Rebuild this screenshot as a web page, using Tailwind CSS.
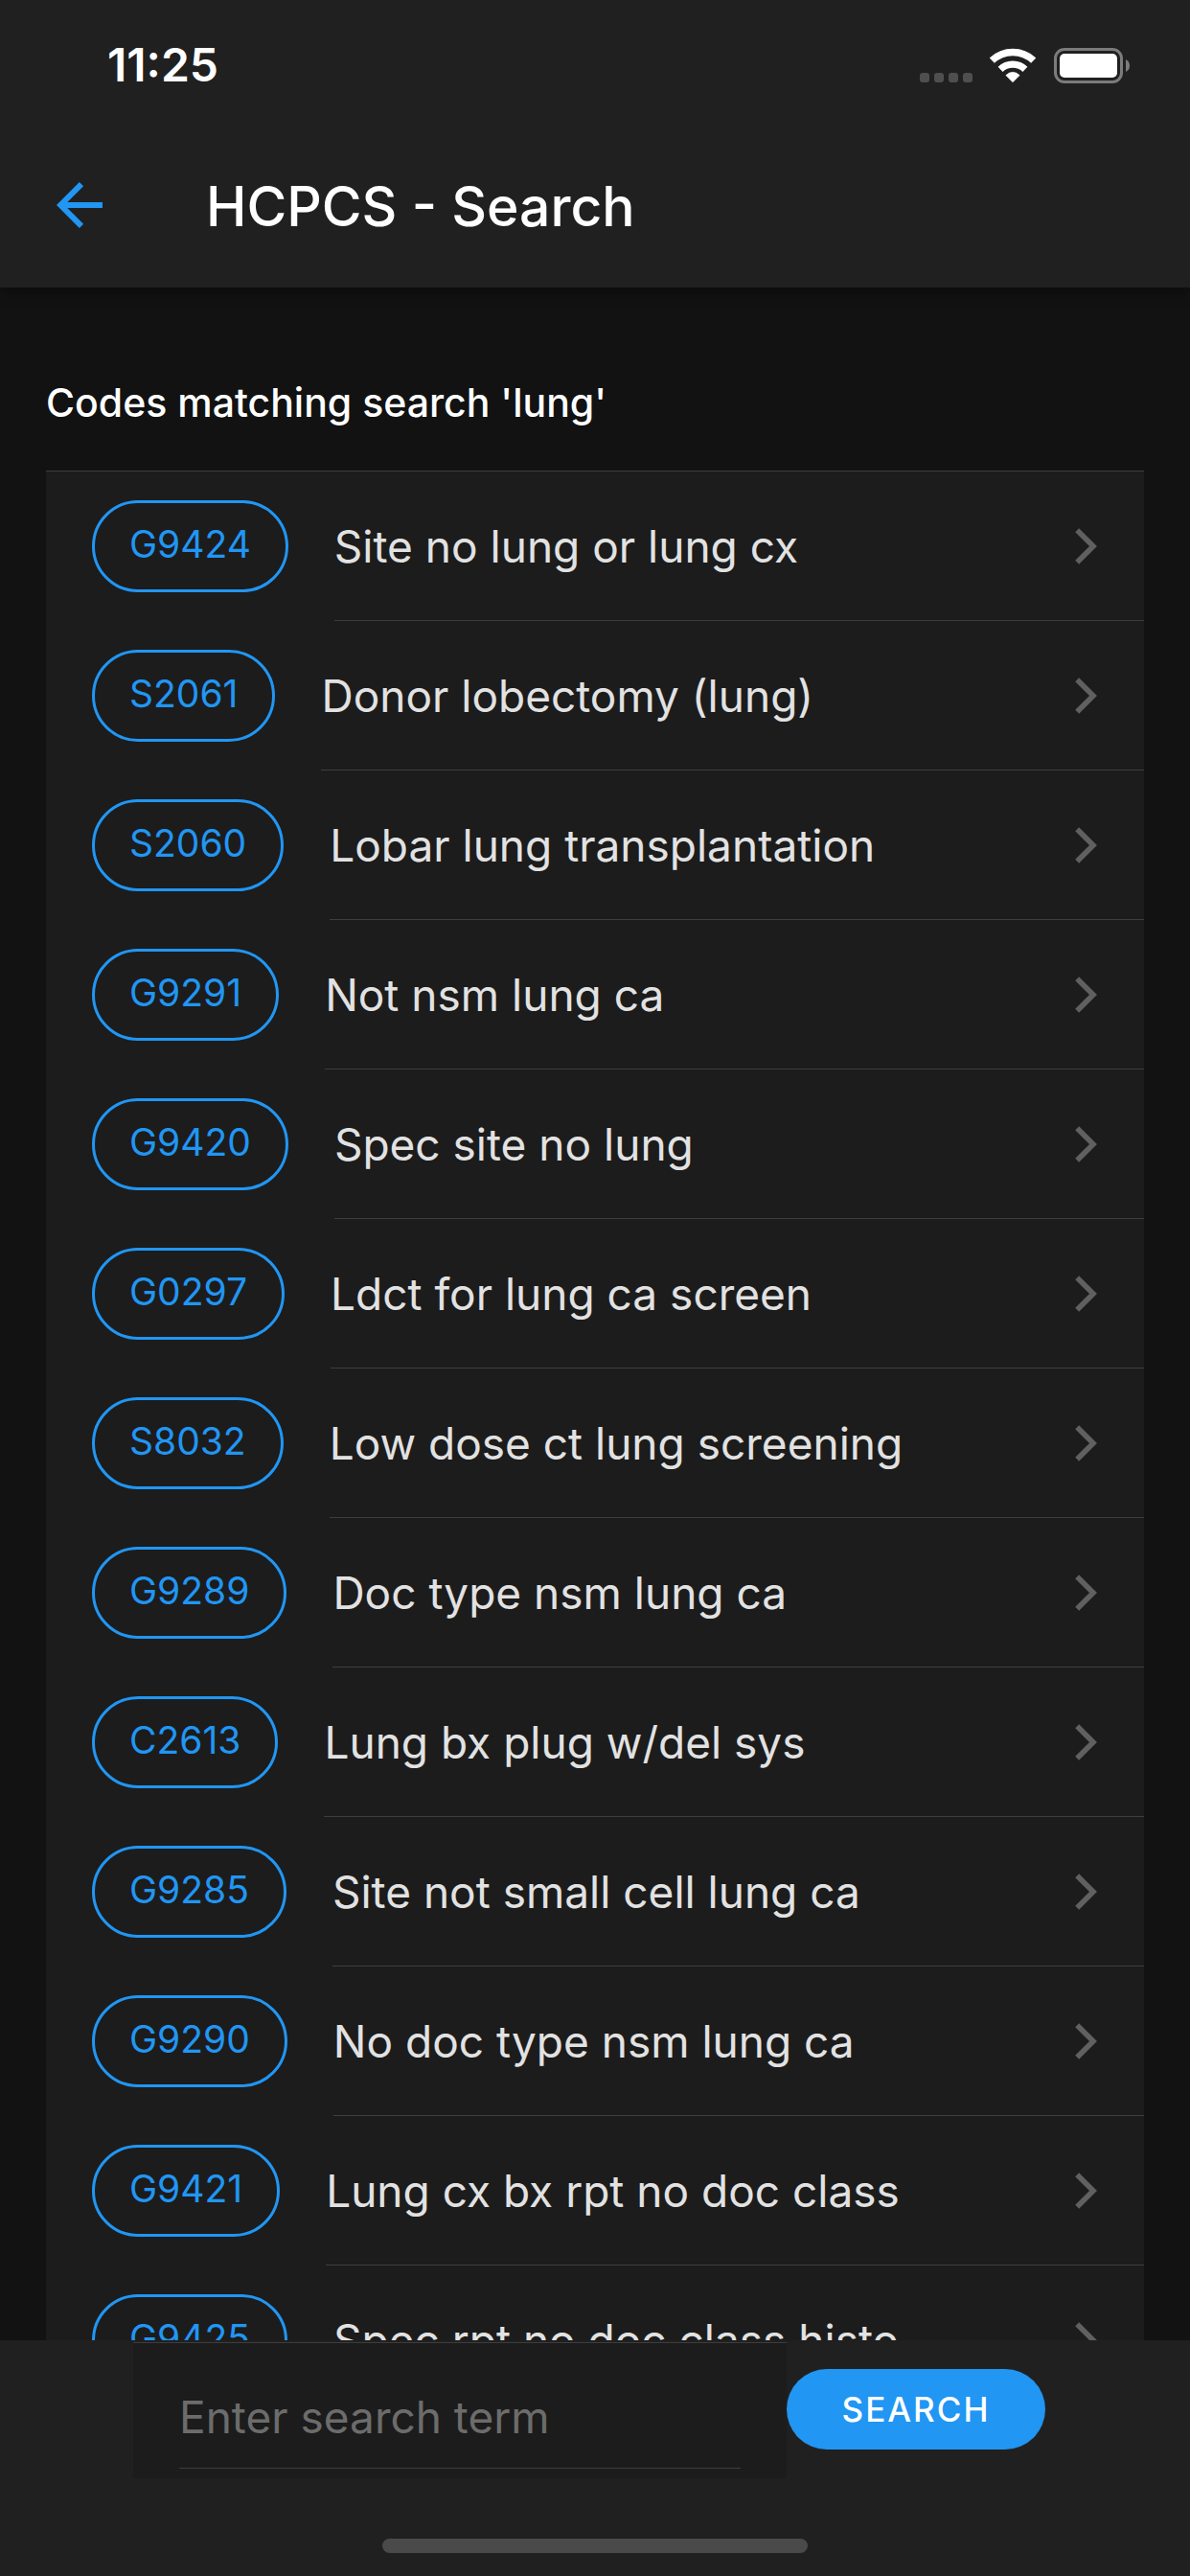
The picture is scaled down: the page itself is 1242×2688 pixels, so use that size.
<!DOCTYPE html>
<html lang="en">
<head>
  <meta charset="UTF-8" />
  <meta name="viewport" content="width=device-width, initial-scale=1.0" />
  <title>HCPCS - Search</title>
  <script src="https://cdn.jsdelivr.net/npm/@tailwindcss/browser@4"></script>
</head>
<body class="h-screen flex flex-col overflow-hidden bg-[#121212] font-['Inter','Liberation_Sans',sans-serif] text-white">

  <!-- shared icons -->
  <svg class="hidden">
    <symbol id="chevron" viewBox="0 0 24 38">
      <path d="M2.2 2.2 19 19 2.2 35.8" fill="none" stroke="currentColor" stroke-width="5.6" />
    </symbol>
  </svg>

  <header class="relative z-10 shrink-0 bg-[#202020] shadow-lg shadow-black/25">
    <!-- status bar -->
    <div class="h-[136px] flex items-center justify-between pl-[112px] pr-[62px]">
      <span class="text-[48px] leading-[56px] font-semibold">11:25</span>
      <div class="flex items-center">
        <svg class="w-[56px] h-[37px]" viewBox="0 0 56 37" fill="#4f4f4f">
          <rect x="0" y="26" width="10" height="10" rx="3" />
          <rect x="15" y="26" width="10" height="10" rx="3" />
          <rect x="30" y="26" width="10" height="10" rx="3" />
          <rect x="45" y="26" width="10" height="10" rx="3" />
        </svg>
        <svg class="ml-[17px] w-[48px] h-[37px]" viewBox="0 0 48 37">
          <path d="M2.3 13.2A31.3 31.3 0 0 1 45.7 13.2" fill="none" stroke="#fff" stroke-width="7.4" />
          <path d="M11.1 22.3A18.6 18.6 0 0 1 36.9 22.3" fill="none" stroke="#fff" stroke-width="7.2" />
          <path d="M24 35.7 16.8 28.6Q24 21.9 31.2 28.6Z" fill="#fff" stroke="#fff" stroke-width="0.6" stroke-linejoin="round" />
        </svg>
        <svg class="ml-[19px] w-[80px] h-[37px]" viewBox="0 0 80 37">
          <rect x="1.5" y="1.5" width="69" height="34" rx="9.5" fill="none" stroke="#7c7c7c" stroke-width="3" />
          <rect x="6" y="6" width="60" height="25" rx="5" fill="#fff" />
          <path d="M75 12Q79 14 79 18.5T75 25Z" fill="#7c7c7c" />
        </svg>
      </div>
    </div>

    <!-- toolbar -->
    <div class="h-[164px] flex items-start pl-[59px]">
      <a href="#" aria-label="Back" class="mt-[54px] text-[#2196f3]">
        <svg class="w-[48px] h-[48px]" viewBox="0 0 48 48">
          <path d="M48 24H6M26 2.2 4.2 24 26 45.8" fill="none" stroke="currentColor" stroke-width="6" />
        </svg>
      </a>
      <h1 class="mt-[44px] ml-[108px] text-[57px] leading-[72px] font-medium">HCPCS - Search</h1>
    </div>
  </header>

  <main class="flex-1 min-h-0 overflow-hidden px-[48px] pt-[92px]">
    <h2 class="text-[41px] leading-[56px] font-medium">Codes matching search 'lung'</h2>

    <ul class="mt-[43px] border-t border-[#3d3d3d] bg-[#1c1c1c] text-[46px] leading-[56px] text-[#e2e2e2]">
      <li><a href="#" class="flex items-center pl-[48px]">
        <span class="h-24 px-9 border-3 border-[#2196f3] rounded-full flex items-center pb-1 text-[39px] text-[#2196f3]">G9424</span>
        <span class="ml-12 h-[156px] flex-1 flex items-center justify-between border-b border-[#3d3d3d] pr-[48px]">Site no lung or lung cx<svg class="w-6 h-[38px] text-[#606060]"><use href="#chevron" /></svg></span>
      </a></li>
      <li><a href="#" class="flex items-center pl-[48px]">
        <span class="h-24 px-9 border-3 border-[#2196f3] rounded-full flex items-center pb-1 text-[39px] text-[#2196f3]">S2061</span>
        <span class="ml-12 h-[156px] flex-1 flex items-center justify-between border-b border-[#3d3d3d] pr-[48px]">Donor lobectomy (lung)<svg class="w-6 h-[38px] text-[#606060]"><use href="#chevron" /></svg></span>
      </a></li>
      <li><a href="#" class="flex items-center pl-[48px]">
        <span class="h-24 px-9 border-3 border-[#2196f3] rounded-full flex items-center pb-1 text-[39px] text-[#2196f3]">S2060</span>
        <span class="ml-12 h-[156px] flex-1 flex items-center justify-between border-b border-[#3d3d3d] pr-[48px]">Lobar lung transplantation<svg class="w-6 h-[38px] text-[#606060]"><use href="#chevron" /></svg></span>
      </a></li>
      <li><a href="#" class="flex items-center pl-[48px]">
        <span class="h-24 px-9 border-3 border-[#2196f3] rounded-full flex items-center pb-1 text-[39px] text-[#2196f3]">G9291</span>
        <span class="ml-12 h-[156px] flex-1 flex items-center justify-between border-b border-[#3d3d3d] pr-[48px]">Not nsm lung ca<svg class="w-6 h-[38px] text-[#606060]"><use href="#chevron" /></svg></span>
      </a></li>
      <li><a href="#" class="flex items-center pl-[48px]">
        <span class="h-24 px-9 border-3 border-[#2196f3] rounded-full flex items-center pb-1 text-[39px] text-[#2196f3]">G9420</span>
        <span class="ml-12 h-[156px] flex-1 flex items-center justify-between border-b border-[#3d3d3d] pr-[48px]">Spec site no lung<svg class="w-6 h-[38px] text-[#606060]"><use href="#chevron" /></svg></span>
      </a></li>
      <li><a href="#" class="flex items-center pl-[48px]">
        <span class="h-24 px-9 border-3 border-[#2196f3] rounded-full flex items-center pb-1 text-[39px] text-[#2196f3]">G0297</span>
        <span class="ml-12 h-[156px] flex-1 flex items-center justify-between border-b border-[#3d3d3d] pr-[48px]">Ldct for lung ca screen<svg class="w-6 h-[38px] text-[#606060]"><use href="#chevron" /></svg></span>
      </a></li>
      <li><a href="#" class="flex items-center pl-[48px]">
        <span class="h-24 px-9 border-3 border-[#2196f3] rounded-full flex items-center pb-1 text-[39px] text-[#2196f3]">S8032</span>
        <span class="ml-12 h-[156px] flex-1 flex items-center justify-between border-b border-[#3d3d3d] pr-[48px]">Low dose ct lung screening<svg class="w-6 h-[38px] text-[#606060]"><use href="#chevron" /></svg></span>
      </a></li>
      <li><a href="#" class="flex items-center pl-[48px]">
        <span class="h-24 px-9 border-3 border-[#2196f3] rounded-full flex items-center pb-1 text-[39px] text-[#2196f3]">G9289</span>
        <span class="ml-12 h-[156px] flex-1 flex items-center justify-between border-b border-[#3d3d3d] pr-[48px]">Doc type nsm lung ca<svg class="w-6 h-[38px] text-[#606060]"><use href="#chevron" /></svg></span>
      </a></li>
      <li><a href="#" class="flex items-center pl-[48px]">
        <span class="h-24 px-9 border-3 border-[#2196f3] rounded-full flex items-center pb-1 text-[39px] text-[#2196f3]">C2613</span>
        <span class="ml-12 h-[156px] flex-1 flex items-center justify-between border-b border-[#3d3d3d] pr-[48px]">Lung bx plug w/del sys<svg class="w-6 h-[38px] text-[#606060]"><use href="#chevron" /></svg></span>
      </a></li>
      <li><a href="#" class="flex items-center pl-[48px]">
        <span class="h-24 px-9 border-3 border-[#2196f3] rounded-full flex items-center pb-1 text-[39px] text-[#2196f3]">G9285</span>
        <span class="ml-12 h-[156px] flex-1 flex items-center justify-between border-b border-[#3d3d3d] pr-[48px]">Site not small cell lung ca<svg class="w-6 h-[38px] text-[#606060]"><use href="#chevron" /></svg></span>
      </a></li>
      <li><a href="#" class="flex items-center pl-[48px]">
        <span class="h-24 px-9 border-3 border-[#2196f3] rounded-full flex items-center pb-1 text-[39px] text-[#2196f3]">G9290</span>
        <span class="ml-12 h-[156px] flex-1 flex items-center justify-between border-b border-[#3d3d3d] pr-[48px]">No doc type nsm lung ca<svg class="w-6 h-[38px] text-[#606060]"><use href="#chevron" /></svg></span>
      </a></li>
      <li><a href="#" class="flex items-center pl-[48px]">
        <span class="h-24 px-9 border-3 border-[#2196f3] rounded-full flex items-center pb-1 text-[39px] text-[#2196f3]">G9421</span>
        <span class="ml-12 h-[156px] flex-1 flex items-center justify-between border-b border-[#3d3d3d] pr-[48px]">Lung cx bx rpt no doc class<svg class="w-6 h-[38px] text-[#606060]"><use href="#chevron" /></svg></span>
      </a></li>
      <li><a href="#" class="flex items-center pl-[48px]">
        <span class="h-24 px-9 border-3 border-[#2196f3] rounded-full flex items-center pb-1 text-[39px] text-[#2196f3]">G9425</span>
        <span class="ml-12 h-[156px] flex-1 flex items-center justify-between border-b border-[#3d3d3d] pr-[48px]">Spec rpt no doc class histo<svg class="w-6 h-[38px] text-[#606060]"><use href="#chevron" /></svg></span>
      </a></li>
    </ul>
  </main>

  <footer class="shrink-0 bg-[#202020] pt-[2px] pb-6">
    <form class="flex items-start pl-[139px] pr-[151px]">
      <label class="flex-1 min-w-0 border-t border-[#3d3d3d] bg-[#1c1c1c] px-12 pb-[10px]">
        <input type="text" aria-label="Search term" placeholder="Enter search term"
          class="block w-full h-[131px] pt-6 border-b border-[#3d3d3d] bg-transparent text-[46px] leading-[56px] placeholder:text-[#6c6c6c] outline-none" />
      </label>
      <button type="button" class="mt-7 h-[84px] w-[270px] rounded-full bg-[#2196f3] text-[35px] font-medium tracking-[2px]">SEARCH</button>
    </form>
    <div class="mt-[63px] mx-auto w-[444px] h-[15px] rounded-full bg-[#4a4a4a]"></div>
  </footer>

</body>
</html>
